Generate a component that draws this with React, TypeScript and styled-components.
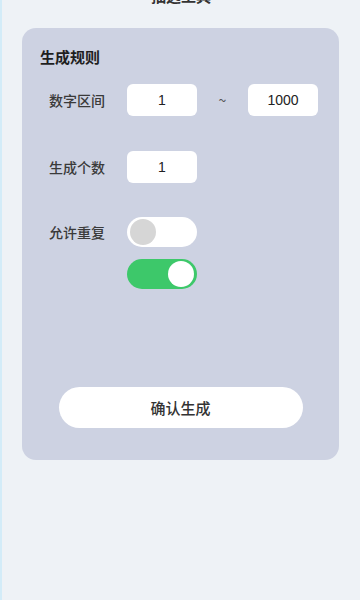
import React, { useState } from 'react';
import styled, { createGlobalStyle } from 'styled-components';

const GlobalStyle = createGlobalStyle`
  html, body {
    margin: 0;
    padding: 0;
    background: #eef2f6;
  }
  body {
    font-family: "Noto Sans CJK SC", "Noto Sans", "Liberation Sans", sans-serif;
    color: #333;
    overflow: hidden;
  }
`;

const Page = styled.div`
  min-height: 600px;
  box-sizing: border-box;
  border-left: 2px solid #d3ecf8;
  overflow: hidden;
`;

const Header = styled.div`
  height: 20px;
  margin-top: -14px;
  line-height: 20px;
  text-align: center;
  font-size: 15px;
  font-weight: 700;
  color: #333;
`;

const Card = styled.div`
  margin: 22px 21px 0 20px;
  background: #cdd2e2;
  border-radius: 14px;
  padding: 19px 18px 32px;
  display: flex;
  flex-direction: column;
`;

const Title = styled.div`
  font-size: 15px;
  font-weight: 700;
  line-height: 20px;
  color: #1f1f1f;
`;

const Row = styled.div<{ $gap: number }>`
  display: flex;
  align-items: center;
  margin-top: ${p => p.$gap}px;
  padding-left: 9px;
`;

const Label = styled.span`
  width: 78px;
  flex-shrink: 0;
  font-size: 14px;
  font-weight: 500;
  color: #3a3a3a;
`;

const NumberBox = styled.input`
  width: 70px;
  height: 32px;
  box-sizing: border-box;
  border: none;
  border-radius: 6px;
  background: #fff;
  text-align: center;
  font-family: "Liberation Sans", "Noto Sans", sans-serif;
  font-size: 14px;
  color: #222;
  outline: none;
  padding: 0;
`;

const Tilde = styled.span`
  width: 51px;
  text-align: center;
  font-size: 14px;
  color: #555;
`;

const Track = styled.button<{ $on: boolean }>`
  position: relative;
  width: 70px;
  height: 30px;
  border: none;
  padding: 0;
  border-radius: 15px;
  cursor: pointer;
  background: ${p => (p.$on ? '#3dc86a' : '#ffffff')};

  &::after {
    content: '';
    position: absolute;
    top: 2px;
    left: ${p => (p.$on ? '41px' : '3px')};
    width: 26px;
    height: 26px;
    border-radius: 50%;
    background: ${p => (p.$on ? '#ffffff' : '#d6d6d6')};
  }
`;

const SwitchRow = styled.div`
  display: flex;
  margin-top: 12px;
  padding-left: 87px;
`;

const SubmitButton = styled.button`
  align-self: center;
  margin-top: 98px;
  width: 244px;
  height: 41px;
  border: none;
  border-radius: 21px;
  background: #fff;
  font-family: "Noto Sans CJK SC", sans-serif;
  font-size: 15px;
  font-weight: 500;
  color: #333;
  cursor: pointer;
`;

export default function App() {
  const [min, setMin] = useState('1');
  const [max, setMax] = useState('1000');
  const [count, setCount] = useState('1');
  const [repeat, setRepeat] = useState(false);
  const [repeat2, setRepeat2] = useState(true);

  return (
    <>
      <GlobalStyle />
      <Page>
        <Header>抽选工具</Header>
        <Card>
          <Title>生成规则</Title>
          <Row $gap={17}>
            <Label>数字区间</Label>
            <NumberBox value={min} onChange={e => setMin(e.target.value)} />
            <Tilde>~</Tilde>
            <NumberBox value={max} onChange={e => setMax(e.target.value)} />
          </Row>
          <Row $gap={35}>
            <Label>生成个数</Label>
            <NumberBox value={count} onChange={e => setCount(e.target.value)} />
          </Row>
          <Row $gap={34}>
            <Label>允许重复</Label>
            <Track $on={repeat} onClick={() => setRepeat(!repeat)} />
          </Row>
          <SwitchRow>
            <Track $on={repeat2} onClick={() => setRepeat2(!repeat2)} />
          </SwitchRow>
          <SubmitButton>确认生成</SubmitButton>
        </Card>
      </Page>
    </>
  );
}
